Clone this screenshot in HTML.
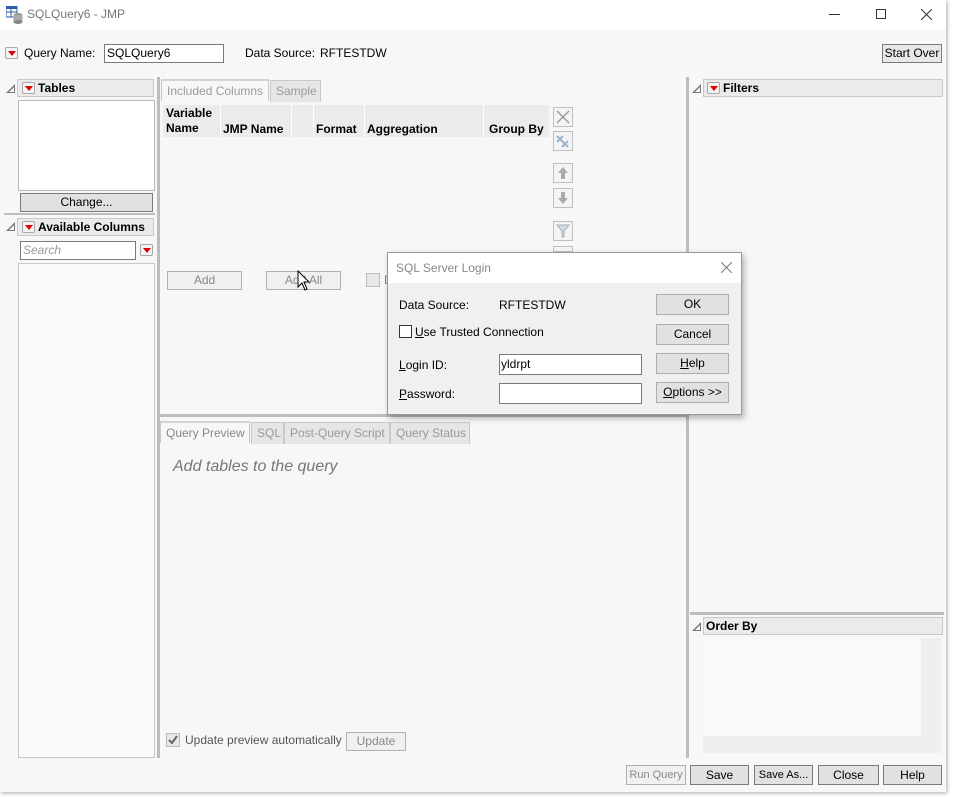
<!DOCTYPE html>
<html><head><meta charset="utf-8"><style>
*{box-sizing:border-box;margin:0;padding:0}
body{width:954px;height:797px;background:#fff;font-family:"Liberation Sans",sans-serif;font-size:12px;color:#000;position:relative;overflow:hidden;white-space:nowrap}
.a{position:absolute}
.win{left:0;top:0;width:946px;height:792px;background:#f7f7f7;box-shadow:1px 1px 4px rgba(0,0,0,.35)}
.title{left:0;top:0;width:946px;height:30px;background:#fff}
.rb{position:absolute;width:13px;height:12px;border:1px solid #a8a8a8;border-radius:2px;background:#f4f4f4}
.rb:after{content:"";position:absolute;left:2px;top:3px;border-left:4px solid transparent;border-right:4px solid transparent;border-top:5px solid #d00}
.hdr{position:absolute;height:18px;background:#ebebeb;border:1px solid #c8c8c8;font-weight:bold;font-size:12px;line-height:16px}
.tri{position:absolute;width:0;height:0;border-left:9px solid transparent;border-bottom:9px solid #777}
.tri:after{content:"";position:absolute;left:-6px;top:3px;border-left:5px solid transparent;border-bottom:5px solid #f7f7f7}
.btn{position:absolute;border:1px solid #7a7a7a;background:#e1e1e1;text-align:center;line-height:17px;font-size:12px;white-space:nowrap;overflow:hidden}
.dis{border-color:#b0b0b0;color:#888;background:#f0f0f0}
.box{position:absolute;background:#fff;border:1px solid #b8b8b8}
.vs{position:absolute;background:#bdbdbd}
.tab{position:absolute;height:22px;border:1px solid #c8c8c8;border-bottom:none;color:#999;line-height:21px;padding-left:5px;background:#e6e6e6}
.ib{position:absolute;left:553px;width:20px;height:20px;border:1px solid #c0c0c0;background:#f4f4f4}
</style></head><body>
<div class="a win"></div>
<div class="a title"></div>
<svg class="a" style="left:6px;top:6px" width="18" height="18" viewBox="0 0 18 18"><rect x="0" y="0" width="11" height="11" fill="#fff" stroke="#2a5ea8"/><rect x="0" y="0" width="11" height="3" fill="#2a5ea8"/><line x1="0" y1="6" x2="11" y2="6" stroke="#2a5ea8"/><line x1="5" y1="0" x2="5" y2="11" stroke="#2a5ea8"/><ellipse cx="12" cy="9" rx="4.5" ry="2" fill="#999"/><rect x="7.5" y="9" width="9" height="7" fill="#aaa"/><ellipse cx="12" cy="16" rx="4.5" ry="2" fill="#888"/></svg>
<div class="a" style="left:27px;top:7px;color:#777;font-size:12px">SQLQuery6 - JMP</div>
<div class="a" style="left:829px;top:14px;width:11px;height:1px;background:#333"></div>
<div class="a" style="left:876px;top:9px;width:10px;height:10px;border:1px solid #333"></div>
<svg class="a" style="left:921px;top:9px" width="11" height="11"><path d="M0 0L11 11M11 0L0 11" stroke="#333" stroke-width="1"/></svg>

<div class="rb" style="left:5px;top:47px"></div>
<div class="a" style="left:24px;top:46px">Query Name:</div>
<div class="box" style="left:104px;top:44px;width:120px;height:19px;border-color:#7a7a7a;padding-left:2px;line-height:16px">SQLQuery6</div>
<div class="a" style="left:245px;top:46px">Data Source:</div>
<div class="a" style="left:320px;top:46px">RFTESTDW</div>
<div class="btn" style="left:882px;top:44px;width:60px;height:19px;background:#e8e8e8">Start Over</div>

<!-- left panel -->
<div class="tri" style="left:6px;top:84px"></div>
<div class="hdr" style="left:17px;top:79px;width:137px"><span style="position:absolute;left:20px">Tables</span></div>
<div class="rb" style="left:22px;top:82px"></div>
<div class="box" style="left:18px;top:100px;width:137px;height:91px"></div>
<div class="btn" style="left:20px;top:193px;width:133px;height:19px">Change...</div>
<div class="vs" style="left:4px;top:213px;width:151px;height:2px"></div>
<div class="tri" style="left:6px;top:222px"></div>
<div class="hdr" style="left:17px;top:218px;width:137px"><span style="position:absolute;left:20px">Available Columns</span></div>
<div class="rb" style="left:22px;top:221px"></div>
<div class="box" style="left:20px;top:241px;width:116px;height:19px;border-color:#7a7a7a;color:#999;font-style:italic;padding-left:2px;line-height:16px">Search</div>
<div class="rb" style="left:140px;top:244px"></div>
<div class="box" style="left:18px;top:263px;width:137px;height:495px;background:#fafafa;border-color:#c8c8c8"></div>
<div class="vs" style="left:157px;top:77px;width:3px;height:681px"></div>

<!-- middle -->
<div class="tab" style="left:161px;top:79px;width:108px;background:#f7f7f7;border-top:2px solid #d4d4d4">Included Columns</div>
<div class="tab" style="left:270px;top:80px;width:51px">Sample</div>
<div class="a" style="left:163px;top:105px;width:386px;height:32px;background:#ebebeb;font-weight:bold;line-height:15px">
<div class="a" style="left:3px;top:1px">Variable<br>Name</div>
<div class="a" style="left:57px;top:0;width:1px;height:32px;background:#fff"></div>
<div class="a" style="left:60px;top:17px">JMP Name</div>
<div class="a" style="left:128px;top:0;width:1px;height:32px;background:#fff"></div>
<div class="a" style="left:150px;top:0;width:1px;height:32px;background:#fff"></div>
<div class="a" style="left:153px;top:17px">Format</div>
<div class="a" style="left:201px;top:0;width:1px;height:32px;background:#fff"></div>
<div class="a" style="left:204px;top:17px">Aggregation</div>
<div class="a" style="left:320px;top:0;width:1px;height:32px;background:#fff"></div>
<div class="a" style="left:326px;top:17px">Group By</div>
</div>
<div class="ib" style="top:107px"><svg width="18" height="18"><path d="M3 3L15 15M15 3L3 15" stroke="#999" stroke-width="1.3"/></svg></div>
<div class="ib" style="top:131px"><svg width="18" height="18"><path d="M3 4L9 10M9 4L3 10M8 9L14 15M14 9L8 15" stroke="#9ab4cc" stroke-width="2"/></svg></div>
<div class="ib" style="top:163px"><svg width="18" height="18"><path d="M9 3L14 9H11V15H7V9H4Z" fill="#aaa"/></svg></div>
<div class="ib" style="top:188px"><svg width="18" height="18"><path d="M9 15L14 9H11V3H7V9H4Z" fill="#aaa"/></svg></div>
<div class="ib" style="top:221px"><svg width="18" height="18"><path d="M3 3H15L10 9V15H8V9Z" fill="#cfdbe6" stroke="#aab"/></svg></div>
<div class="ib" style="top:246px;height:6px"></div>
<div class="btn dis" style="left:167px;top:271px;width:75px;height:19px">Add</div>
<div class="btn dis" style="left:266px;top:271px;width:75px;height:19px">Add All</div>
<svg class="a" style="left:297px;top:270px" width="14" height="22"><path d="M1 1V17L5 13L8 20L10 19L7 12H12Z" fill="#fff" stroke="#000"/></svg>
<div class="a" style="left:366px;top:273px;width:14px;height:14px;border:1px solid #bbb;background:#e8e8e8"></div>
<div class="a" style="left:384px;top:273px;color:#888">D</div>
<div class="vs" style="left:160px;top:414px;width:526px;height:3px"></div>
<div class="tab" style="left:160px;top:421px;width:90px;background:#f7f7f7;color:#888;border-top:2px solid #d4d4d4">Query Preview</div>
<div class="tab" style="left:251px;top:422px;width:33px">SQL</div>
<div class="tab" style="left:284px;top:422px;width:106px">Post-Query Script</div>
<div class="tab" style="left:390px;top:422px;width:80px">Query Status</div>
<div class="a" style="left:173px;top:458px;font-size:16px;font-style:italic;color:#777">Add tables to the query</div>
<div class="a" style="left:166px;top:733px;width:14px;height:14px;border:1px solid #bbb;background:#e8e8e8"><svg width="12" height="12" style="position:absolute;left:0;top:0"><path d="M2 6L5 9L10 2" stroke="#666" stroke-width="2" fill="none"/></svg></div>
<div class="a" style="left:185px;top:733px;color:#555">Update preview automatically</div>
<div class="btn dis" style="left:346px;top:732px;width:60px;height:19px">Update</div>
<div class="vs" style="left:686px;top:77px;width:3px;height:681px"></div>

<!-- right -->
<div class="tri" style="left:692px;top:84px"></div>
<div class="hdr" style="left:703px;top:79px;width:240px"><span style="position:absolute;left:19px">Filters</span></div>
<div class="rb" style="left:707px;top:82px"></div>
<div class="vs" style="left:690px;top:612px;width:254px;height:3px"></div>
<div class="tri" style="left:692px;top:622px"></div>
<div class="hdr" style="left:703px;top:617px;width:240px"><span style="position:absolute;left:2px">Order By</span></div>
<div class="a" style="left:703px;top:638px;width:238px;height:115px;background:#efefef"></div>
<div class="a" style="left:703px;top:638px;width:218px;height:98px;background:#f9f9f9"></div>

<!-- bottom buttons -->
<div class="btn dis" style="left:626px;top:765px;width:60px;height:20px;line-height:18px;font-size:11px">Run Query</div>
<div class="btn" style="left:690px;top:765px;width:59px;height:20px;line-height:18px">Save</div>
<div class="btn" style="left:754px;top:765px;width:59px;height:20px;line-height:18px;font-size:11px">Save As...</div>
<div class="btn" style="left:818px;top:765px;width:61px;height:20px;line-height:18px">Close</div>
<div class="btn" style="left:883px;top:765px;width:59px;height:20px;line-height:18px">Help</div>

<!-- dialog -->
<div class="a" style="left:387px;top:252px;width:355px;height:163px;background:#f0f0f0;border:1px solid #9a9a9a;box-shadow:2px 3px 6px rgba(0,0,0,.3)">
<div class="a" style="left:0;top:0;width:353px;height:30px;background:#fff"></div>
<div class="a" style="left:8px;top:8px;color:#888">SQL Server Login</div>
<svg class="a" style="left:333px;top:9px" width="11" height="11"><path d="M0 0L11 11M11 0L0 11" stroke="#777"/></svg>
<div class="a" style="left:11px;top:45px">Data Source:</div>
<div class="a" style="left:111px;top:45px">RFTESTDW</div>
<div class="a" style="left:11px;top:72px;width:13px;height:13px;border:1px solid #333;background:#fff"></div>
<div class="a" style="left:27px;top:72px"><u>U</u>se Trusted Connection</div>
<div class="a" style="left:11px;top:105px"><u>L</u>ogin ID:</div>
<div class="a" style="left:111px;top:101px;width:143px;height:21px;background:#fff;border:1px solid #7a7a7a;padding-left:1px;line-height:18px">yldrpt</div>
<div class="a" style="left:11px;top:134px"><u>P</u>assword:</div>
<div class="a" style="left:111px;top:130px;width:143px;height:21px;background:#fff;border:1px solid #7a7a7a"></div>
<div class="btn" style="left:268px;top:41px;width:73px;height:21px;line-height:19px;border-color:#adadad">OK</div>
<div class="btn" style="left:268px;top:71px;width:73px;height:21px;line-height:19px;border-color:#adadad">Cancel</div>
<div class="btn" style="left:268px;top:100px;width:73px;height:21px;line-height:19px;border-color:#adadad"><u>H</u>elp</div>
<div class="btn" style="left:268px;top:129px;width:73px;height:21px;line-height:19px;border-color:#adadad"><u>O</u>ptions &gt;&gt;</div>
</div>
</body></html>
